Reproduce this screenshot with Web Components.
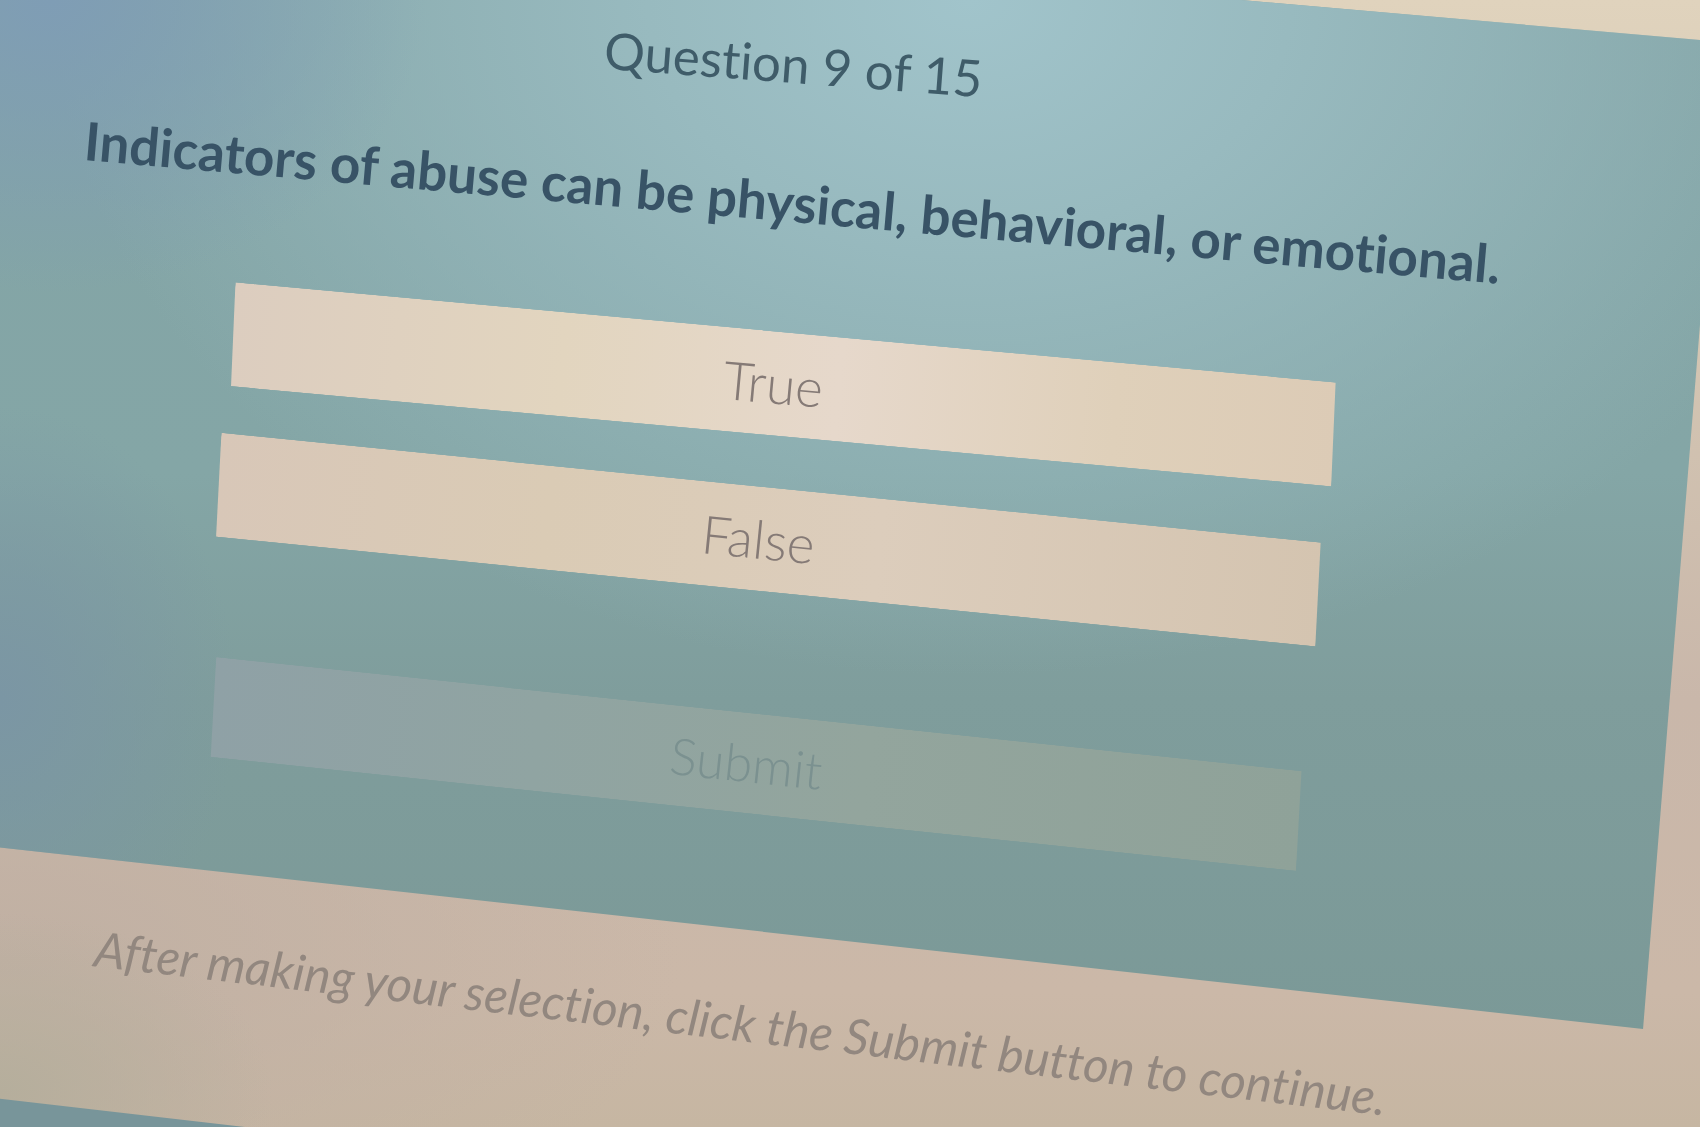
<!DOCTYPE html>
<html lang="en">
<head>
<meta charset="utf-8">
<meta name="viewport" content="width=device-width, initial-scale=1">
<title>Question 9 of 15</title>
<style>
  body {
    margin: 0; font-family: Lato, "Open Sans", sans-serif; font-size: 51px; line-height: 60px;
    font-variant-ligatures: none;
  }
</style>
</head>
<body>
<quiz-slide>
  <quiz-heading slot="heading">
    Question 9 of 15
    <span slot="prompt">Indicators of abuse can be physical, behavioral, or emotional.</span>
  </quiz-heading>
  <quiz-options slot="options">
    <quiz-button>True</quiz-button>
    <quiz-button class="second">False</quiz-button>
  </quiz-options>
  <quiz-submit slot="submit">Submit</quiz-submit>
  <quiz-hint slot="hint">After making your selection, click the Submit button to continue.</quiz-hint>
</quiz-slide>

<script>
  const define = (name, html) => {
    const template = document.createElement('template');
    template.innerHTML = html;
    customElements.define(name, class extends HTMLElement {
      constructor() {
        super();
        this.attachShadow({ mode: 'open' }).append(template.content.cloneNode(true));
      }
    });
  };

  // The page: cream ground, the teal question panel and the top of the next panel.
  define('quiz-slide', `
    <style>
      :host {
        display: block; position: relative; overflow: hidden;
        box-sizing: border-box; min-height: 100vh;
        background:
          radial-gradient(ellipse 16% 16% at 0% 97%, #b5ae9c, transparent),
          radial-gradient(ellipse 40% 30% at 0% 85%, #c0b0a3, transparent),
          linear-gradient(180deg, #e0d3bd 0%, #d5c8b4 25%, #c9b7aa 62%, #cbb8a8 88%, #c6b6a2 100%);
      }
      :host::before, :host::after { content: ""; position: absolute; inset: 0; }
      :host::before {
        clip-path: polygon(0 0, 73% 0, 100% 3.55%, 100% 28.8%, 96.65% 91.3%, 0 75.2%);
        background:
          radial-gradient(ellipse 22% 26% at 3% 0%, #7f9db5, transparent),
          radial-gradient(ellipse 14% 26% at 0% 62%, #7b96a4, transparent),
          radial-gradient(ellipse 54% 60% at 57% 0%, #a1c4cb 0%, #98babf 35%, transparent 100%),
          linear-gradient(180deg, #83a4a6 0%, #84a6a6 42%, #7f9d9c 62%, #7a9896 100%);
      }
      :host::after {
        clip-path: polygon(0 97.5%, 14.4% 100%, 0 100%);
        background: #78959a;
      }
      form {
        position: relative; z-index: 1;
        display: flex; flex-direction: column;
        padding: 34px 0 40px;
      }
    </style>
    <form onsubmit="return false">
      <slot name="heading"></slot>
      <slot name="options"></slot>
      <slot name="submit"></slot>
      <slot name="hint"></slot>
    </form>`);

  define('quiz-heading', `
    <style>
      :host {
        display: flex; flex-direction: column; align-items: center; gap: 78px;
        padding-right: 114px; white-space: nowrap; color: #3f5c69;
      }
      h1, h2 { margin: 0; font-size: inherit; font-weight: 400; }
      h1 { transform: rotate(4.3deg); }
      h2 { font-size: 53px; font-weight: 700; color: #385366; transform: rotate(5deg); }
    </style>
    <h1><slot></slot></h1>
    <h2><slot name="prompt"></slot></h2>`);

  define('quiz-options', `
    <style>
      :host { display: block; padding: 100px 148px 0 0; }
      div {
        display: flex; flex-direction: column; align-items: center; gap: 52px;
        transform: rotate(5.5deg);
      }
    </style>
    <div><slot></slot></div>`);

  define('quiz-button', `
    <style>
      :host {
        display: block; width: 71.5%; transform: rotate(-0.3deg);
        --fill: linear-gradient(90deg, #dccdbf 0%, #e2d5bf 30%, #e6d8cb 55%, #dfd0ba 80%, #dccbb6 100%);
      }
      :host(.second) {
        transform: rotate(0.2deg);
        --fill: linear-gradient(90deg, #d8c7b8 0%, #dacbb5 30%, #dccdbc 60%, #d4c4b0 100%);
      }
      button {
        display: block; width: 100%; height: 104px; padding: 0 20px 0 0; border: 0;
        background: var(--fill); color: #857a76;
        font: inherit; font-size: 53px; font-weight: 300; font-variant-ligatures: none; cursor: pointer;
        clip-path: polygon(0 0, calc(100% - 5px) 0, 100% 100%, 5px 100%);
      }
    </style>
    <button type="button"><slot></slot></button>`);

  define('quiz-submit', `
    <style>
      :host { display: flex; justify-content: center; padding: 122px 188px 0 0; }
      button {
        width: 72.5%; height: 100px; padding: 0 20px 0 0; border: 0;
        background: linear-gradient(90deg, #8fa1a6 0%, #90a4a2 30%, #93a59d 60%, #8fa299 100%);
        color: #7b9190; font: inherit; font-weight: 300;
        clip-path: polygon(0 0, calc(100% - 5px) 0, 100% 100%, 5px 100%);
        transform: rotate(6deg);
      }
    </style>
    <button type="submit" disabled><slot></slot></button>`);

  define('quiz-hint', `
    <style>
      :host {
        display: flex; justify-content: center; padding: 178px 218px 0 0;
        white-space: nowrap; color: #92877f; font-size: 49px;
      }
      p { margin: 0; font-style: italic; transform: rotate(6.6deg); }
    </style>
    <p><slot></slot></p>`);
</script>
</body>
</html>
